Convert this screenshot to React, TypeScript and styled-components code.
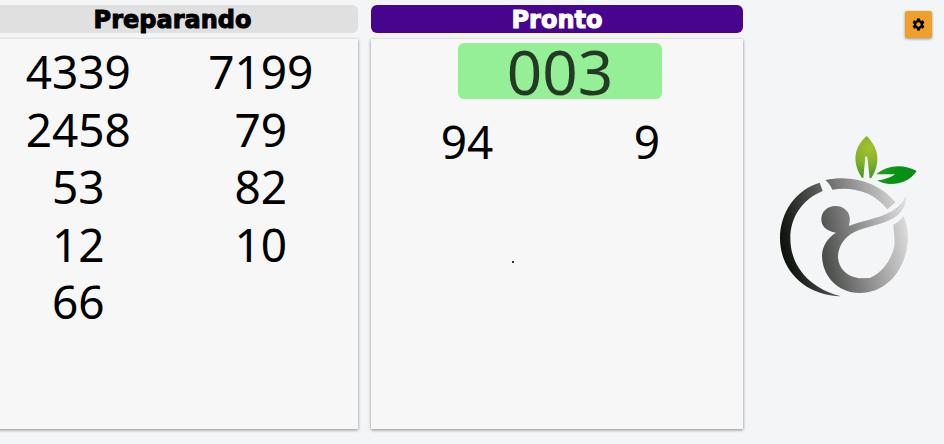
import React from "react";
import styled, { createGlobalStyle } from "styled-components";
import { MdSettings } from "react-icons/md";

const GlobalStyle = createGlobalStyle`
  * { box-sizing: border-box; }
  body {
    margin: 0;
    background: #f3f5f7;
    color: #000;
    font-family: "Noto Sans", "Open Sans", sans-serif;
    overflow-x: hidden;
  }
`;

const Board = styled.main`
  display: grid;
  grid-template-columns: minmax(0, 371fr) minmax(0, 372fr) minmax(0, 188fr);
  gap: 13px;
  min-height: 100vh;
  margin-left: -13px;
`;

const Column = styled.section`
  display: flex;
  flex-direction: column;
  gap: 6px;
  padding: 5px 0 15px;
`;

const Heading = styled.h2<{ $ready?: boolean }>`
  margin: 0;
  padding-top: 2px;
  border-radius: 6px;
  background: ${(p) => (p.$ready ? "#47058e" : "#e0e0e0")};
  color: ${(p) => (p.$ready ? "#fff" : "#000")};
  font-family: "DejaVu Sans", sans-serif;
  font-size: 24px;
  font-weight: 700;
  line-height: 26px;
  text-align: center;
  -webkit-text-stroke: 1px currentColor;
`;

const Panel = styled.div<{ $ready?: boolean }>`
  flex: 1;
  padding: ${(p) => (p.$ready ? "4px 0 4px 6px" : "4px 0")};
  background: #f7f7f7;
  box-shadow: 0 1px 3px rgba(0, 0, 0, 0.45);
`;

const Current = styled.output`
  display: block;
  width: 56%;
  margin: 0 auto 14px;
  border-radius: 6px;
  background: #94ef96;
  color: #243a24;
  font-size: 62px;
  line-height: 56px;
  text-align: center;
`;

const Tickets = styled.ul`
  display: grid;
  grid-template-columns: 1fr 1fr;
  margin: 0;
  padding: 0 6px 0 0;
  list-style: none;
  font-size: 46px;
  line-height: 1.25;
  text-align: center;
`;

const Speck = styled.i`
  display: block;
  width: 2px;
  height: 2px;
  margin: 90px 0 0 37%;
  background: #333;
`;

const Side = styled.aside`
  display: flex;
  flex-direction: column;
  padding: 11px 12px 0 22px;
`;

const SettingsButton = styled.button`
  display: grid;
  place-items: center;
  align-self: flex-end;
  width: 27px;
  height: 27px;
  padding: 0;
  border: 0;
  border-radius: 2px;
  background: #ef9f2b;
  color: #000;
  box-shadow: 0 1px 3px rgba(0, 0, 0, 0.4);
`;

const Logo = styled.svg`
  width: 140px;
  margin-top: 97px;
`;

const preparing = ["4339", "7199", "2458", "79", "53", "82", "12", "10", "66"];
const ready = ["94", "9"];

export default function App() {
  return (
    <>
      <GlobalStyle />
      <Board>
        <Column>
          <Heading>Preparando</Heading>
          <Panel>
            <Tickets>
              {preparing.map((n) => (
                <li key={n}>{n}</li>
              ))}
            </Tickets>
          </Panel>
        </Column>
        <Column>
          <Heading $ready>Pronto</Heading>
          <Panel $ready>
            <Current>003</Current>
            <Tickets>
              {ready.map((n) => (
                <li key={n}>{n}</li>
              ))}
            </Tickets>
            <Speck />
          </Panel>
        </Column>
        <Side>
          <SettingsButton type="button" aria-label="Configurações">
            <MdSettings size={15} />
          </SettingsButton>
          <Logo viewBox="24 45 420 490" role="img" aria-label="Logo">
            <defs>
              <linearGradient id="metal" gradientUnits="userSpaceOnUse" x1="30" y1="380" x2="414" y2="300">
                <stop offset="0" stopColor="#0a0f0a" />
                <stop offset="0.1" stopColor="#1c211c" />
                <stop offset="0.4" stopColor="#5e605e" />
                <stop offset="0.7" stopColor="#a0a0a0" />
                <stop offset="1" stopColor="#dedede" />
              </linearGradient>
              <radialGradient id="leafTop" gradientUnits="userSpaceOnUse" cx="296" cy="85" r="90">
                <stop offset="0" stopColor="#a6c22e" />
                <stop offset="0.5" stopColor="#84b02a" />
                <stop offset="1" stopColor="#3f981f" />
              </radialGradient>
              <linearGradient id="leafSide" x1="0" y1="0" x2="1" y2="0.3">
                <stop offset="0" stopColor="#35a51e" />
                <stop offset="0.5" stopColor="#069412" />
                <stop offset="1" stopColor="#088c16" />
              </linearGradient>
            </defs>
            <g fill="url(#metal)">
              <path d="M149 188C80 208 30 275 30 355C30 450 105 527 213 529C120 505 61 440 61 355C61 290 98 238 158 213Z" />
              <path d="M166 180C245 163 325 185 377 247L352 268C310 215 250 200 187 209C182 197 175 187 166 180Z" />
              <path d="M198 338C168 334 154 318 154 298C154 274 173 258 197 258C224 258 243 280 239 303L237 318C285 298 340 296 383 261C398 248 404 237 407 226C410 252 400 270 385 284C350 314 290 318 255 335C222 351 204 380 204 412C206 448 232 470 267 475L300 474C345 455 374 400 374 365L370 314C385 306 394 299 400 288C411 312 414 335 414 355C410 448 350 519 270 519C200 519 156 465 156 405C158 378 172 354 198 338Z" />
            </g>
            <path fill="url(#leafTop)" d="M290 48C328 84 332 132 304 174L299 175L292 111L286 109L280 174L276 173C248 132 248 84 290 48Z" />
            <path fill="url(#leafSide)" d="M319 163C350 134 402 131 440 153C411 197 351 200 321 181C342 180 362 173 375 163Z" />
          </Logo>
        </Side>
      </Board>
    </>
  );
}
